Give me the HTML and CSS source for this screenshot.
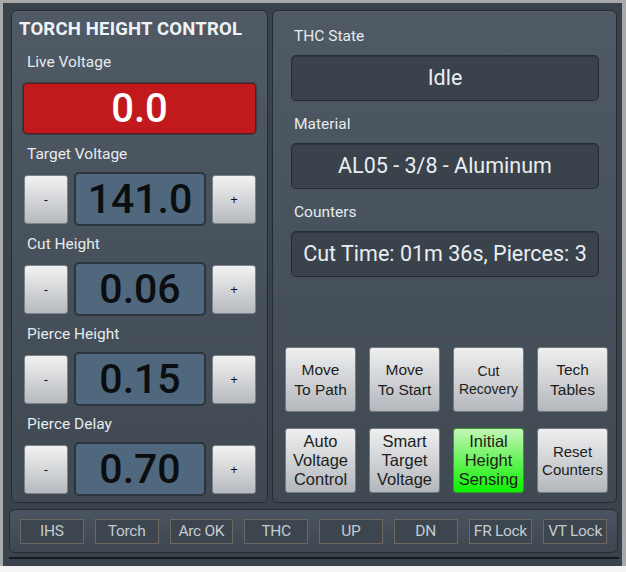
FILE: index.html
```html
<!DOCTYPE html>
<html lang="en">
<head>
  <meta charset="UTF-8" />
  <meta name="viewport" content="width=device-width, initial-scale=1.0" />
  <title>Torch Height Control</title>
  <link rel="stylesheet" href="styles.css">
</head>
<body>
  <div class="window">
    <div class="main">
      <section class="panel thc">
        <h1>TORCH HEIGHT CONTROL</h1>
        <div class="label">Live Voltage</div>
        <div class="live">0.0</div>

        <div class="label">Target Voltage</div>
        <div class="stepper">
          <button class="step">-</button>
          <div class="value">141.0</div>
          <button class="step">+</button>
        </div>

        <div class="label">Cut Height</div>
        <div class="stepper">
          <button class="step">-</button>
          <div class="value">0.06</div>
          <button class="step">+</button>
        </div>

        <div class="label">Pierce Height</div>
        <div class="stepper">
          <button class="step">-</button>
          <div class="value">0.15</div>
          <button class="step">+</button>
        </div>

        <div class="label">Pierce Delay</div>
        <div class="stepper">
          <button class="step">-</button>
          <div class="value">0.70</div>
          <button class="step">+</button>
        </div>
      </section>

      <section class="panel status">
        <div class="label">THC State</div>
        <div class="display">Idle</div>

        <div class="label">Material</div>
        <div class="display">AL05 - 3/8 - Aluminum</div>

        <div class="label">Counters</div>
        <div class="display">Cut Time: 01m 36s, Pierces: 3</div>

        <div class="actions">
          <button class="action two">Move<br>To Path</button>
          <button class="action two">Move<br>To Start</button>
          <button class="action small">Cut<br>Recovery</button>
          <button class="action two">Tech<br>Tables</button>
          <button class="action">Auto<br>Voltage<br>Control</button>
          <button class="action">Smart<br>Target<br>Voltage</button>
          <button class="action on">Initial<br>Height<br>Sensing</button>
          <button class="action mid">Reset<br>Counters</button>
        </div>
      </section>
    </div>

    <div class="indicators">
      <span class="led">IHS</span>
      <span class="led">Torch</span>
      <span class="led">Arc OK</span>
      <span class="led">THC</span>
      <span class="led">UP</span>
      <span class="led">DN</span>
      <span class="led">FR Lock</span>
      <span class="led">VT Lock</span>
    </div>
    <div class="rule"></div>
  </div>
</body>
</html>
```

FILE: styles.css
```css
body {
  margin: 0;
  background-color: #f4f4f4;
  font-family: Roboto, "Liberation Sans", sans-serif;
}

.window {
  width: 606px;
  height: 556px;
  border: 3px solid #a7a9ab;
  border-right-width: 4px;
  border-bottom: none;
  background-color: #3a424b;
  padding: 7px 5px 0 8px;
}

.main {
  display: flex;
  gap: 4px;
  height: 493px;
}

.panel {
  border: 1px solid #262c33;
  border-radius: 6px;
  background: linear-gradient(#4f5a65, #404952);
  box-shadow: inset 0 1px 0 rgba(255, 255, 255, 0.06);
  box-sizing: border-box;
}

.label {
  color: #e6ebef;
  font-size: 15.5px;
  line-height: 17px;
}

/* left column: live voltage and the four steppers */
.thc {
  width: 258px;
  padding: 7px 11px 0 11px;
}

.thc h1 {
  margin: 0 0 0 -4px;
  font-size: 18.5px;
  line-height: 22px;
  font-weight: 700;
  color: #eef3f7;
  letter-spacing: 0.2px;
}

.thc .label {
  margin: 0 0 0 4px;
}

.thc h1 + .label {
  margin-top: 14px;
}

.live {
  margin-top: 12px;
  height: 51px;
  border: 1px solid #5c1a1c;
  border-radius: 4px;
  background-color: #c1191c;
  box-shadow: 0 0 0 1px rgba(0, 0, 0, 0.25);
  color: #fff;
  font-size: 40px;
  font-weight: 500;
  line-height: 49px;
  text-align: center;
  box-sizing: border-box;
}

.live + .label {
  margin-top: 12px;
}

.stepper {
  display: grid;
  grid-template-columns: 44px 1fr 44px;
  gap: 6px;
  align-items: center;
  margin: 9px 0 10px 1px;
}

.step {
  height: 49px;
  padding: 0;
  border: 1px solid #7c838a;
  border-radius: 3px;
  background: linear-gradient(#f2f2f2, #b6babf);
  color: #111;
  font-family: "Liberation Sans", sans-serif;
  font-size: 13px;
}

.value {
  height: 54px;
  border: 2px solid #2c343c;
  border-radius: 5px;
  background-color: #4f687e;
  color: #0b0d0f;
  font-size: 41px;
  font-weight: 500;
  line-height: 50px;
  text-align: center;
  box-sizing: border-box;
}

/* right column: state readouts and action buttons */
.status {
  flex: 1;
  padding: 17px 17px 0 18px;
}

.status .label {
  margin-left: 3px;
}

.display {
  margin: 10px 0 15px 0;
  height: 46px;
  border: 1px solid #252b31;
  border-radius: 5px;
  background-color: #3a424b;
  box-shadow: inset 0 1px 1px rgba(0, 0, 0, 0.2);
  color: #e9eef2;
  font-size: 21.5px;
  line-height: 44px;
  text-align: center;
  box-sizing: border-box;
}

.actions {
  display: grid;
  grid-template-columns: repeat(4, 71px);
  grid-auto-rows: 65px;
  column-gap: 13px;
  row-gap: 16px;
  margin: 70px -9px 0 -6px;
}

.action {
  padding: 0;
  border: 1px solid #737a81;
  border-radius: 3px;
  background: linear-gradient(#efefef, #b3b7bc);
  color: #1d1d1d;
  font-family: "Liberation Sans", sans-serif;
  font-size: 16.5px;
  line-height: 19px;
}

.action.two {
  font-size: 15.5px;
  line-height: 20px;
}

.action.small {
  font-size: 14px;
  line-height: 18px;
}

.action.mid {
  font-size: 15px;
  line-height: 18px;
}

.action.on {
  border-color: #3b9a2c;
  background: linear-gradient(#c3f6b5, #0cf000);
}

/* status lamps along the bottom */
.indicators {
  display: flex;
  gap: 11px;
  margin: 6px -1px 0 -2px;
  height: 44px;
  padding: 0 10px;
  align-items: center;
  border: 1px solid #262c33;
  border-radius: 6px;
  background: linear-gradient(#4b5560, #3e4750);
  box-sizing: border-box;
}

.led {
  width: 64px;
  height: 25px;
  border: 1px solid #6d6862;
  background-color: #3d454e;
  color: #c4cbd2;
  font-size: 15.5px;
  line-height: 23px;
  letter-spacing: -0.3px;
  text-align: center;
  box-sizing: border-box;
}

.rule {
  margin: 4px -2px 0 -2px;
  height: 2px;
  background-color: #161a1e;
}
```
